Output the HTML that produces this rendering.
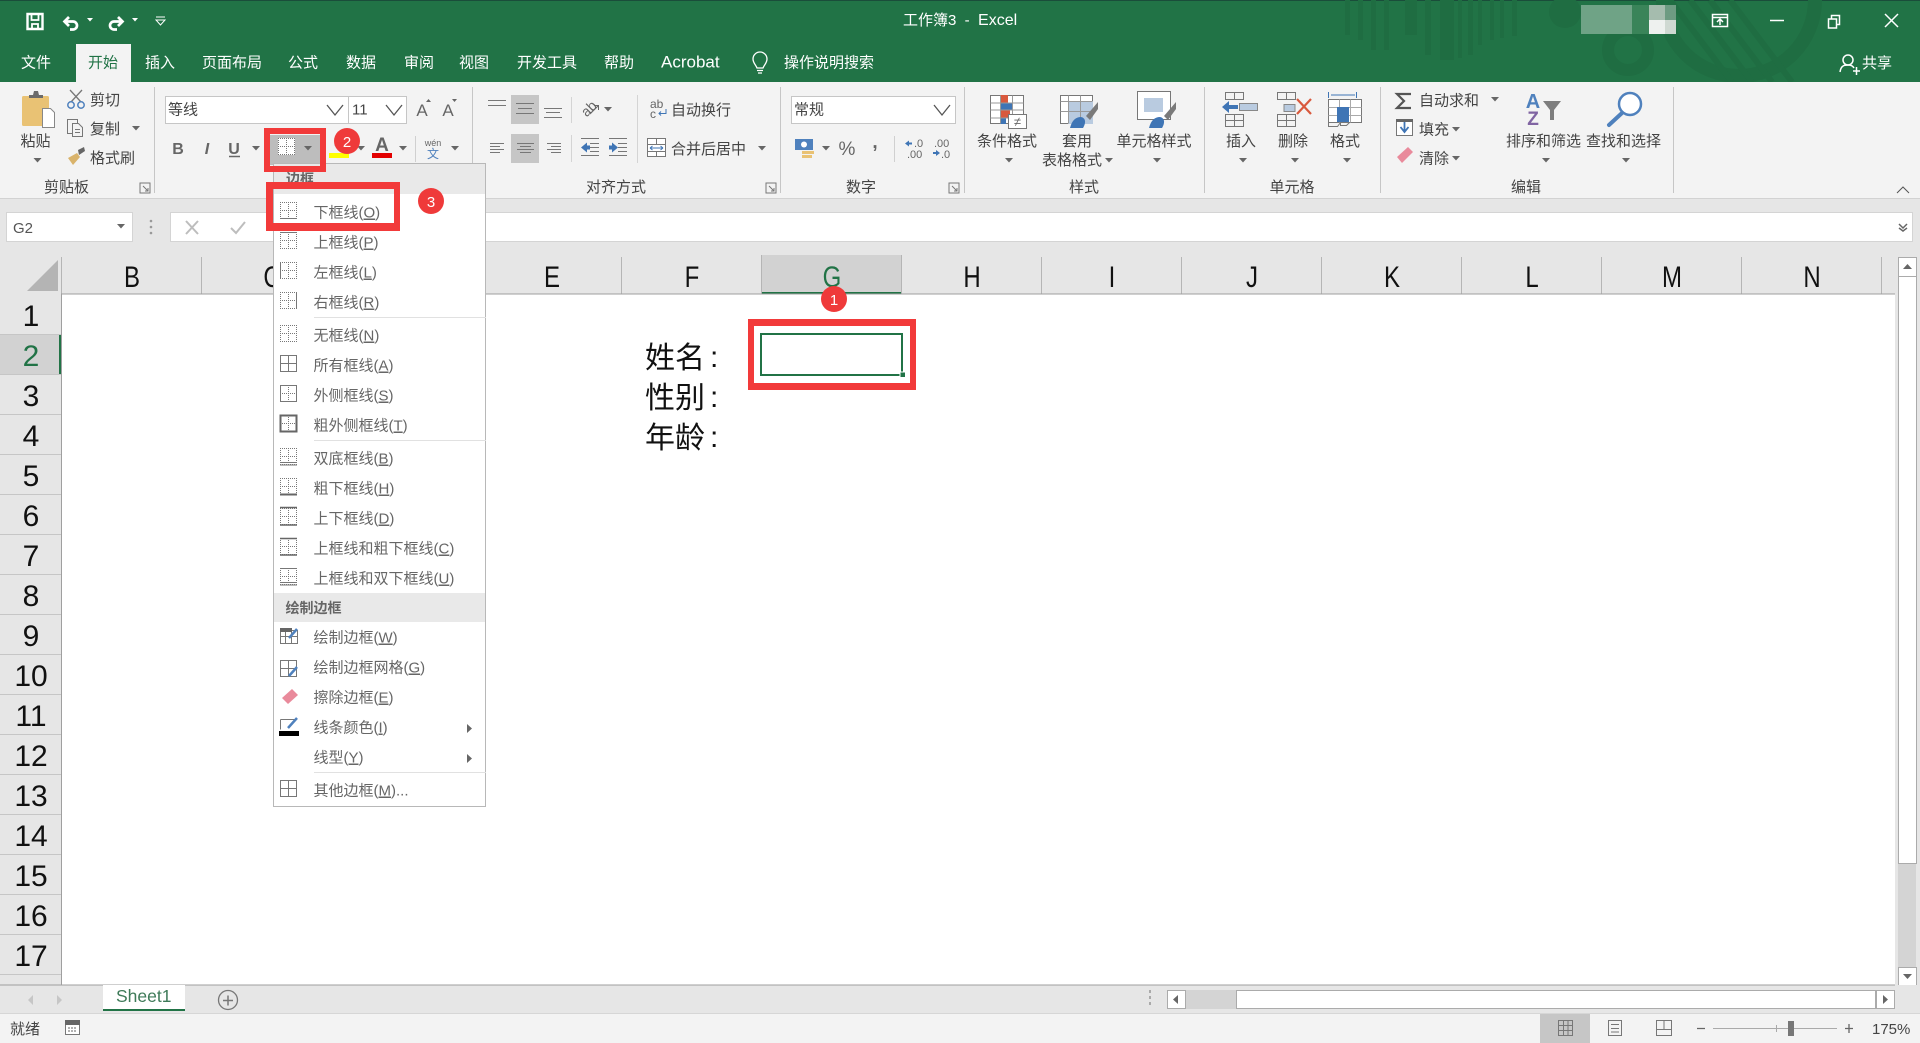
<!DOCTYPE html>
<html lang="zh-CN"><head><meta charset="utf-8"><title>工作簿3 - Excel</title>
<style>
html,body{margin:0;padding:0;background:#fff;overflow:hidden;width:1920px;height:1043px}
svg{position:absolute;left:0;top:0;display:block}
text{font-family:"Liberation Sans","Noto Sans CJK SC",sans-serif;font-size:15px;fill:#444;white-space:pre}
.w{fill:#fff}.m{fill:#666}.c{text-anchor:middle}
.u{text-decoration:underline}
.h{font-size:30px;fill:#111;text-anchor:middle}
.big{font-size:30px;fill:#111}
.b{font-weight:bold}
</style></head><body>
<svg width="1920" height="1043" viewBox="0 0 1920 1043" xmlns="http://www.w3.org/2000/svg">
<defs>
<path id="ca" d="M-4-2h8l-4 4.500z" fill="#666"/>
<path id="chev" d="M-8-5l8 10 8-10" fill="none" stroke="#555" stroke-width="1.300"/>
<path id="lau" d="M-5-5h10v10h-10z M-2-2l5 5M3 0v3h-3" fill="none" stroke="#777"/>
<g id="dg" fill="none" stroke="#777" stroke-dasharray="1 1"><path d="M0 .5h17M0 16.500h17M0 8.500h17M.5 0v17M16.500 0v17M8.500 0v17"/></g>
<g id="sg" fill="none" stroke="#777"><path d="M.5.5h16v16H.5zM8.500.5v16M.5 8.500h16"/></g>
</defs>

<!-- title bar -->
<rect width="1920" height="82" fill="#217346"/>
<rect width="1920" height="1" fill="#1a4d3a"/>
<g fill="#1f6d42">
<path d="M1345 0h5v35h-5zM1358 0h5v40h-5zM1371 0h5v50h-5zM1384 0h5v50h-5zM1405 0h12v35h-12zM1425 0h6v55h-6zM1440 0h14v60h-14zM1458 0h4v58h-4zM1468 0h5v55h-5zM1478 0h4v45h-4zM1490 0h4v40h-4zM1500 0h4v38h-4zM1512 0h5v36h-5z"/>
<circle cx="1565" cy="12" r="16"/>
</g>
<g fill="none" stroke="#1f6d42">
<circle cx="1628" cy="50" r="20" stroke-width="12"/>
<circle cx="1739" cy="0" r="76" stroke-width="14"/>
<path d="M1670 0l62 82M1690 0l62 82M1710 0l62 82M1730 0l62 82" stroke-width="6"/>
</g>
<rect x="1581" y="5" width="51" height="29" fill="#6fa386"/>
<rect x="1632" y="5" width="17" height="29" fill="#3a8459"/>
<rect x="1649" y="5" width="16" height="15" fill="#a5bcae"/>
<rect x="1665" y="5" width="11" height="15" fill="#6d9b82"/>
<rect x="1649" y="20" width="16" height="14" fill="#eef1ef"/>
<rect x="1665" y="20" width="11" height="14" fill="#cfd9d2"/>

<!-- QAT -->
<g fill="none" stroke="#fff">
<path d="M27.500 14h15v15h-15z" stroke-width="2.400"/><path d="M31.500 14v6h7v-6M32 29v-5h6v5" stroke-width="1.800"/>
<path d="M69 17l-4.500 4.500 4.500 4.500" stroke-width="2.700"/><path d="M65 21.500h8a4 4 0 0 1 0 8h-3" stroke-width="2.700"/>
<path d="M118 17l4.500 4.500-4.500 4.500" stroke-width="2.700"/><path d="M122 21.500h-8a4 4 0 0 0 0 8h3" stroke-width="2.700"/>
<path d="M156 17h9M156 20h9l-4.500 5z" stroke-width="1"/>
</g>
<path d="M87 18h6l-3 3.500zM132 18h6l-3 3.500z" fill="#fff"/>
<text x="903" y="25" class="w">工作簿3  -  <tspan style="font-size:16px">Excel</tspan></text>

<!-- window buttons -->
<g fill="none" stroke="#fff" stroke-width="1.500">
<path d="M1712.500 14.500h15v12h-15zM1712.500 17.500h15M1720 25v-6M1717 22l3-3 3 3"/>
<path d="M1770 20.500h14"/>
<path d="M1828.500 19h8v9h-8zM1831.500 19v-3.500h8v9h-3"/>
<path d="M1885 14l13 13M1898 14l-13 13"/>
<circle cx="1848" cy="60" r="5"/><path d="M1840 72c1-7 5-7 8-7s5 1 6 3M1853 71h7M1856.500 67v8"/>
</g>

<!-- tabs -->
<rect x="76" y="44" width="55" height="38" fill="#f3f3f3"/>
<text x="21" y="67.500" class="w">文件</text>
<text x="88" y="67.500" style="fill:#217346">开始</text>
<text x="145" y="67.500" class="w">插入</text>
<text x="202" y="67.500" class="w">页面布局</text>
<text x="288" y="67.500" class="w">公式</text>
<text x="346" y="67.500" class="w">数据</text>
<text x="404" y="67.500" class="w">审阅</text>
<text x="459" y="67.500" class="w">视图</text>
<text x="517" y="67.500" class="w">开发工具</text>
<text x="604" y="67.500" class="w">帮助</text>
<text x="661" y="67.500" class="w" style="font-size:17px">Acrobat</text>
<g fill="none" stroke="#fff" stroke-width="1.300"><path d="M757 68c-1-3-4-5-4-9a7 7 0 0 1 14 0c0 4-3 6-4 9zM757 70.500h6M758 73h4"/></g>
<text x="784" y="67.500" class="w">操作说明搜索</text>
<text x="1862" y="68" class="w">共享</text>

<!-- ribbon -->
<rect y="82" width="1920" height="116" fill="#f3f3f3"/>
<rect y="198" width="1920" height="1" fill="#d2d2d2"/>
<rect y="199" width="1920" height="95" fill="#e6e6e6"/>
<path d="M154.500 87v106M472.500 87v106M780.500 87v106M964.500 87v106M1204.500 87v106M1380.500 87v106M1673.500 87v106" stroke="#c6c6c6"/>

<!-- clipboard -->
<rect x="22" y="96" width="27" height="30" rx="1.500" fill="#e9c274"/>
<path d="M29 98v-3h4l1-4h4l1 4h4v3z" fill="#6b6b6b"/>
<path d="M42.500 108.500h8l4 4v15h-12z" fill="#fff" stroke="#888"/>
<text x="35.500" y="146" class="c">粘贴</text><use href="#ca" x="37.500" y="160"/>
<g fill="none" stroke="#777" stroke-width="1.300"><path d="M70 90l11 12M82 90l-11 12"/></g>
<g fill="none" stroke="#4f81bd" stroke-width="1.500"><circle cx="71" cy="105" r="3.200"/><circle cx="81" cy="105" r="3.200"/></g>
<text x="90" y="105">剪切</text>
<g fill="#f3f3f3" stroke="#777"><path d="M67.500 119.500h10v14h-10z"/><path d="M72.500 123.500h6l4 4v9h-10z"/><path d="M75 129.500h5M75 132.500h5"/></g>
<text x="90" y="134">复制</text><use href="#ca" x="136" y="128"/>
<path d="M78 150l6-3 1 4-6 4z" fill="#666"/><path d="M68 158l9-5 3 4-7 8z" fill="#d9b36b"/>
<text x="90" y="163">格式刷</text>
<text x="44" y="192">剪贴板</text><use href="#lau" x="145" y="188"/>

<!-- font -->
<rect x="165.500" y="96.500" width="241" height="27" fill="#fff" stroke="#c6c6c6"/>
<path d="M348.500 96v28" stroke="#c6c6c6"/>
<text x="168" y="114.500">等线</text><text x="352" y="114.500">11</text>
<use href="#chev" x="335" y="110"/><use href="#chev" x="394" y="110"/>
<text x="422" y="116" class="c m" style="font-size:17px">A</text><path d="M426 102l2.500-3 2.500 3z" fill="#666"/>
<text x="448" y="116" class="c m" style="font-size:17px">A</text><path d="M452 99l2.500 3 2.500-3z" fill="#666"/>
<text x="178" y="154" class="c m b" style="font-size:16px">B</text>
<text x="207" y="154" class="c m b" style="font-size:16px;font-style:italic">I</text>
<text x="234" y="154" class="c m b" style="font-size:16px">U</text><path d="M229 156.500h11" stroke="#666" stroke-width="1.500"/>
<use href="#ca" x="256" y="148"/>
<rect x="270" y="135" width="50" height="30" fill="#bdbdbd"/>
<rect x="278" y="138" width="17" height="17" fill="#fff"/><use href="#dg" x="278" y="138"/>
<use href="#ca" x="308" y="148"/>
<path d="M335 145l6-5 6 6-5 5z" fill="#fff" stroke="#888"/>
<rect x="329" y="153" width="20" height="5" fill="#ffff00"/><use href="#ca" x="361" y="148"/>
<text x="382" y="151" class="c m b" style="font-size:19px">A</text>
<rect x="372" y="153" width="20" height="5" fill="#e30000"/><use href="#ca" x="403" y="148"/>
<path d="M415.500 136v26" stroke="#d0d0d0"/>
<text x="433" y="146" class="c m" style="font-size:9px">wén</text>
<text x="433" y="158" class="c" style="font-size:12px;fill:#4f81bd">文</text><use href="#ca" x="455" y="148"/>

<!-- alignment -->
<rect x="511" y="95" width="28" height="29" fill="#c6c6c6"/><rect x="511" y="134" width="28" height="29" fill="#c6c6c6"/>
<g stroke="#777" fill="none">
<path d="M488 100.500h18M488 105.500h18"/>
<path d="M516 103.500h18M518 108.500h14M516 113.500h18"/>
<path d="M544 108.500h18M546 112.500h14M544 117.500h18"/>
<path d="M490 143.500h14M490 146.500h10M490 149.500h14M490 152.500h10"/>
<path d="M517 143.500h17M520 146.500h11M517 149.500h17M520 152.500h11"/>
<path d="M547 143.500h14M551 146.500h10M547 149.500h14M551 152.500h10"/>
<path d="M581 138.500h18M590 143.500h9M590 147.500h9M590 151.500h9M581 155.500h18"/>
<path d="M609 138.500h18M618 143.500h9M618 147.500h9M618 151.500h9M609 155.500h18"/>
</g>
<path d="M571.500 97v26M571.500 135v27M637.500 95v68" stroke="#d4d4d4"/>
<path d="M581 147.500l6-5v3h3v4h-3v3zM618 147.500l-6-5v3h-3v4h3v3z" fill="#3f75b5"/>
<text x="581" y="114" class="m" style="font-size:14px" transform="rotate(-45 588 109)">ab</text>
<path d="M590 114l8-8M594 105.500h4.500v4.500" stroke="#666" fill="none"/><use href="#ca" x="608" y="109"/>
<text x="650" y="108" class="m" style="font-size:12px">ab</text><text x="650" y="118" class="m" style="font-size:12px">c</text>
<path d="M666 109v4.500h-7m2-2l-2 2 2 2" stroke="#3f75b5" fill="none"/>
<text x="671" y="115">自动换行</text>
<path d="M647.500 138.500h18v18h-18zM647.500 144.500h18M647.500 151.500h18M656.500 138.500v6M656.500 151.500v5" stroke="#777" fill="#fff"/>
<path d="M650 148h13M650 148l2.500-2M650 148l2.500 2M663 148l-2.500-2M663 148l-2.500 2" stroke="#3f75b5" fill="none"/>
<text x="671" y="154">合并后居中</text><use href="#ca" x="762" y="148"/>
<text x="586" y="192">对齐方式</text><use href="#lau" x="771" y="188"/>

<!-- number -->
<rect x="791.500" y="96.500" width="164" height="27" fill="#fff" stroke="#c6c6c6"/>
<text x="794" y="114.500">常规</text><use href="#chev" x="942" y="110"/>
<rect x="795" y="139" width="18" height="11" fill="#4f81bd"/><circle cx="804" cy="144.500" r="3" fill="#fff"/>
<path d="M802 151h12v3h-12zM802 155h10v3h-10z" fill="#e9c274"/>
<use href="#ca" x="826" y="148"/>
<text x="847" y="155" class="c m" style="font-size:19px">%</text>
<text x="875" y="148" class="c m b" style="font-size:19px">,</text>
<path d="M894.500 136v26" stroke="#d0d0d0"/>
<text x="914" y="147" class="m" style="font-size:11px">.0</text><text x="907" y="158" class="m" style="font-size:11px">.00</text>
<path d="M905 143.500l4-3v2h3v2h-3v2z" fill="#3f75b5"/>
<text x="934" y="147" class="m" style="font-size:11px">.00</text><text x="941" y="158" class="m" style="font-size:11px">.0</text>
<path d="M940 153l-4-3v2h-3v2h3v2z" fill="#3f75b5"/>
<text x="846" y="192">数字</text><use href="#lau" x="954" y="188"/>

<!-- styles -->
<g fill="#fff" stroke="#777"><path d="M990.500 95.500h33v28h-33z"/></g>
<path d="M1000 95h8v8h-8zM1000 110h10v8h-10z" fill="#d9593d"/><path d="M1000 103h12v7h-12zM1000 118h6v6h-6z" fill="#3f75b5"/>
<path d="M1000.500 95.500v28M1012.500 95.500v28M990.500 103h33M990.500 110h33M990.500 118h33" stroke="#999" fill="none"/>
<rect x="1008.500" y="114.500" width="18" height="14" fill="#fff" stroke="#777"/>
<text x="1017.500" y="126" class="c m" style="font-size:13px">≠</text>
<text x="1007" y="146" class="c">条件格式</text><use href="#ca" x="1009" y="160"/>
<rect x="1060.500" y="95.500" width="32" height="28" fill="#fff" stroke="#777"/>
<rect x="1068" y="101" width="25" height="23" fill="#b9cbe0"/>
<path d="M1068.500 95.500v28M1080.500 95.500v28M1060.500 101.500h32M1060.500 111.500h32" stroke="#999" fill="none"/>
<path d="M1098 102l-12 14 4 4 8-11z" fill="#7a7a7a"/><path d="M1070 128c2-8 6-11 11-11 5 1 5 6 2 11z" fill="#3f75b5"/>
<text x="1077" y="146" class="c">套用</text><text x="1072" y="165" class="c">表格格式</text><use href="#ca" x="1109" y="160"/>
<rect x="1137.500" y="91.500" width="33" height="28" fill="#fff" stroke="#777"/>
<rect x="1144" y="98" width="19" height="14" fill="#b9cbe0"/>
<path d="M1176 102l-12 14 4 4 8-11z" fill="#7a7a7a"/><path d="M1149 128c2-8 6-11 11-11 5 1 5 6 2 11z" fill="#3f75b5"/>
<text x="1154" y="146" class="c">单元格样式</text><use href="#ca" x="1157" y="160"/>
<text x="1084" y="192" class="c">样式</text>

<!-- cells -->
<g fill="none" stroke="#777"><path d="M1225.500 92.500h18v7h-18zM1234.500 92.500v7M1225.500 114.500h18v12h-18zM1234.500 114.500v12M1225.500 120.500h18"/></g>
<path d="M1239.500 103.500h18v7h-18z" fill="#b9cbe0" stroke="#888"/>
<path d="M1222 107l7-6v4h9v4h-9v4z" fill="#3f75b5"/>
<text x="1241" y="146" class="c">插入</text><use href="#ca" x="1243" y="160"/>
<g fill="none" stroke="#777"><path d="M1277.500 92.500h18v7h-18zM1286.500 92.500v7M1277.500 114.500h18v12h-18zM1286.500 114.500v12M1277.500 120.500h18"/></g>
<path d="M1284 104.500h11v7h-11z" fill="#b9cbe0" stroke="#888"/>
<path d="M1297 99l14 15M1311 99l-14 15" stroke="#d9593d" stroke-width="2.200" fill="none"/>
<text x="1293" y="146" class="c">删除</text><use href="#ca" x="1295" y="160"/>
<rect x="1328.500" y="99.500" width="33" height="23" fill="#fff" stroke="#777"/>
<path d="M1339.500 99.500v23M1350.500 99.500v23M1328.500 107.500h33M1328.500 115.500h33" stroke="#aaa"/>
<path d="M1328.500 122.500v4h9l3-4M1340.500 122.500v3h6l3-3" fill="none" stroke="#777"/>
<rect x="1337" y="107" width="12" height="15" fill="#3f75b5"/>
<path d="M1328.500 92v6M1356.500 92v6M1331 95h24" stroke="#3f75b5" fill="none"/>
<text x="1345" y="146" class="c">格式</text><use href="#ca" x="1347" y="160"/>
<text x="1292" y="192" class="c">单元格</text>

<!-- edit -->
<path d="M1411 94h-14l7 7-7 7h14" fill="none" stroke="#555" stroke-width="2.200"/>
<text x="1419" y="105.500">自动求和</text><use href="#ca" x="1495" y="99"/>
<rect x="1396.500" y="119.500" width="16" height="16" fill="#fff" stroke="#777"/><rect x="1396" y="119" width="17" height="3" fill="#666"/>
<path d="M1404.500 122v9M1400.500 127l4 5 4-5" stroke="#3f75b5" stroke-width="1.800" fill="none"/>
<text x="1419" y="134.500">填充</text><use href="#ca" x="1456" y="129"/>
<path d="M1397 157l11-10 5 5-11 11z" fill="#e98a9b"/>
<text x="1419" y="163.500">清除</text><use href="#ca" x="1456" y="158"/>
<text x="1533" y="108" class="c b" style="font-size:20px;fill:#4f81bd">A</text>
<text x="1533" y="125" class="c b" style="font-size:19px;fill:#8064a2">Z</text>
<path d="M1543 101h18l-7 9v10h-4v-10z" fill="#7d7d7d"/>
<text x="1506" y="146">排序和筛选</text><use href="#ca" x="1546" y="160"/>
<circle cx="1630" cy="104" r="11" fill="#fff" stroke="#4f81bd" stroke-width="2.500"/>
<path d="M1622 113l-13 12" stroke="#4f81bd" stroke-width="4" stroke-linecap="round"/>
<text x="1586" y="146">查找和选择</text><use href="#ca" x="1626" y="160"/>
<text x="1526" y="192" class="c">编辑</text>
<path d="M1897 193l6-6 6 6" fill="none" stroke="#555"/>

<!-- formula bar -->
<rect x="6.500" y="212.500" width="126" height="29" fill="#fff" stroke="#d4d4d4"/>
<text x="13" y="233" style="fill:#555">G2</text><use href="#ca" x="121" y="226"/>
<circle cx="151" cy="221" r="1.300" fill="#999"/><circle cx="151" cy="227" r="1.300" fill="#999"/><circle cx="151" cy="233" r="1.300" fill="#999"/>
<rect x="170.500" y="212.500" width="1742" height="29" fill="#fff" stroke="#d4d4d4"/>
<path d="M186 221l12 13M198 221l-12 13" stroke="#bdbdbd" stroke-width="2" fill="none"/>
<path d="M231 228l5 5 9-11" stroke="#bdbdbd" stroke-width="2" fill="none"/>
<path d="M1899 224l4 4 4-4M1899 228l4 3 4-3" stroke="#666" fill="none" stroke-width="1.500"/>

<!-- headers -->
<rect x="761" y="255" width="141" height="39" fill="#d2d2d2"/>
<rect x="761" y="292" width="141" height="2" fill="#217346"/>
<path d="M27 291l31-31v31z" fill="#b4b4b4"/>
<g stroke="#b5b5b5"><path d="M201.500 257v37M341.500 257v37M481.500 257v37M621.500 257v37M761.500 255v39M901.500 255v39M1041.500 257v37M1181.500 257v37M1321.500 257v37M1461.500 257v37M1601.500 257v37M1741.500 257v37M1881.500 257v37M61.500 257v37"/></g>
<rect x="0" y="294" width="61" height="691" fill="#e6e6e6"/>
<rect x="61" y="294" width="1834" height="691" fill="#fff"/>
<rect x="61" y="293.500" width="1834" height="1" fill="#9f9f9f"/>
<rect x="61" y="294" width="1" height="691" fill="#9f9f9f"/>
<rect x="0" y="334" width="60" height="41" fill="#d2d2d2"/>
<rect x="59" y="334" width="2" height="41" fill="#217346"/>
<g stroke="#c6c6c6"><path d="M0 334.500h61M0 374.500h61M0 414.500h61M0 454.500h61M0 494.500h61M0 534.500h61M0 574.500h61M0 614.500h61M0 654.500h61M0 694.500h61M0 734.500h61M0 774.500h61M0 814.500h61M0 854.500h61M0 894.500h61M0 934.500h61M0 974.500h61"/></g>
<g>
<text class="h" transform="translate(132,287) scale(.8,1)">B</text>
<text class="h" transform="translate(272,287) scale(.8,1)">C</text>
<text class="h" transform="translate(552,287) scale(.8,1)">E</text>
<text class="h" transform="translate(692,287) scale(.8,1)">F</text>
<text class="h" transform="translate(832,287) scale(.8,1)" style="fill:#217346">G</text>
<text class="h" transform="translate(972,287) scale(.8,1)">H</text>
<text class="h" transform="translate(1112,287) scale(.8,1)">I</text>
<text class="h" transform="translate(1252,287) scale(.8,1)">J</text>
<text class="h" transform="translate(1392,287) scale(.8,1)">K</text>
<text class="h" transform="translate(1532,287) scale(.8,1)">L</text>
<text class="h" transform="translate(1672,287) scale(.8,1)">M</text>
<text class="h" transform="translate(1812,287) scale(.8,1)">N</text>
</g>
<g>
<text class="h" x="31" y="326">1</text>
<text class="h" x="31" y="366" style="fill:#217346">2</text>
<text class="h" x="31" y="406">3</text>
<text class="h" x="31" y="446">4</text>
<text class="h" x="31" y="486">5</text>
<text class="h" x="31" y="526">6</text>
<text class="h" x="31" y="566">7</text>
<text class="h" x="31" y="606">8</text>
<text class="h" x="31" y="646">9</text>
<text class="h" x="31" y="686">10</text>
<text class="h" x="31" y="726">11</text>
<text class="h" x="31" y="766">12</text>
<text class="h" x="31" y="806">13</text>
<text class="h" x="31" y="846">14</text>
<text class="h" x="31" y="886">15</text>
<text class="h" x="31" y="926">16</text>
<text class="h" x="31" y="966">17</text>
</g>

<!-- cells -->
<text class="big" x="645" y="368">姓名</text><text class="big" x="710" y="367">:</text>
<text class="big" x="645" y="408">性别</text><text class="big" x="710" y="407">:</text>
<text class="big" x="645" y="448">年龄</text><text class="big" x="710" y="447">:</text>
<rect x="761" y="334" width="141" height="41" fill="none" stroke="#217346" stroke-width="2"/>
<rect x="900" y="372" width="5.500" height="5.500" fill="#217346" stroke="#fff"/>

<!-- v scrollbar -->
<rect x="1895" y="257" width="25" height="728" fill="#e6e6e6"/>
<rect x="1898" y="276" width="18" height="691" fill="#d4d4d4"/>
<rect x="1898.500" y="276.500" width="18" height="587" fill="#fff" stroke="#ababab"/>
<rect x="1898.500" y="257.500" width="18" height="19" fill="#fff" stroke="#ababab"/>
<rect x="1898.500" y="967.500" width="18" height="18" fill="#fff" stroke="#ababab"/>
<path d="M1903 269l4.500-5 4.500 5z" fill="#666"/><path d="M1903 974l4.500 5 4.500-5z" fill="#666"/>

<!-- tab bar -->
<rect y="985" width="1920" height="29" fill="#e6e6e6"/>
<rect y="984.500" width="1895" height="1" fill="#9f9f9f"/>
<rect y="1013.500" width="1920" height="1" fill="#c6c6c6"/>
<rect x="103" y="985" width="82" height="26" fill="#fff"/>
<rect x="103" y="1009" width="82" height="2" fill="#217346"/>
<text x="116" y="1002" style="font-size:17.500px;fill:#3e7a58">Sheet1</text>
<path d="M33 995l-5 5 5 5zM57 995l5 5-5 5z" fill="#c6c6c6"/>
<circle cx="228" cy="1000" r="9.500" fill="none" stroke="#777" stroke-width="1.300"/>
<path d="M223 1000.500h10M228 995.500v10" stroke="#777" stroke-width="1.500"/>
<path d="M1150 990v3M1150 996v3M1150 1002v3" stroke="#aaa" stroke-width="2"/>
<rect x="1167.500" y="990.500" width="18" height="18" fill="#fff" stroke="#ababab"/>
<path d="M1178 995l-5 4.500 5 4.500z" fill="#666"/>
<rect x="1186" y="990" width="50" height="19" fill="#d4d4d4"/>
<rect x="1236.500" y="990.500" width="639" height="18" fill="#fff" stroke="#ababab"/>
<rect x="1876.500" y="990.500" width="18" height="18" fill="#fff" stroke="#ababab"/>
<path d="M1883 995l5 4.500-5 4.500z" fill="#666"/>

<!-- status bar -->
<rect y="1014" width="1920" height="29" fill="#f3f3f3"/>
<text x="10" y="1034">就绪</text>
<rect x="65.500" y="1021.500" width="14" height="13" fill="#fff" stroke="#777"/><rect x="65" y="1020" width="15" height="5" fill="#666"/>
<path d="M68 1028h9M68 1031h9" stroke="#666" stroke-dasharray="2 1"/>
<rect x="1540" y="1014" width="50" height="29" fill="#c6c6c6"/>
<path d="M1558.500 1020.500h14v15h-14zM1563.500 1020.500v15M1568 1020.500v15M1558.500 1025.500h14M1558.500 1030.500h14" fill="none" stroke="#777"/>
<path d="M1608.500 1020.500h13v15h-13zM1611 1024.500h8M1611 1028.500h8M1611 1032h8" fill="none" stroke="#777"/>
<path d="M1656.500 1020.500h15v15h-15zM1656.500 1029.500h15M1664 1020.500v9" fill="none" stroke="#777"/>
<path d="M1697 1028.500h8M1845 1028.500h8M1849 1024v9" stroke="#666" stroke-width="1.300"/>
<path d="M1713 1028.500h124M1776.500 1025v7" stroke="#aaa"/>
<rect x="1788" y="1021" width="6" height="15" fill="#777"/>
<text x="1872" y="1034">175%</text>

<!-- menu -->
<rect x="273.500" y="163.500" width="212" height="643" fill="#fff" stroke="#b8b8b8"/>
<rect x="274" y="164" width="211" height="30" fill="#e9e9e9"/>
<rect x="274" y="593" width="211" height="29" fill="#e9e9e9"/>
<text x="286" y="184" class="m b" style="font-size:14px">边框</text>
<text x="285.500" y="613" class="m b" style="font-size:14px">绘制边框</text>
<path d="M314 317.500h172M314 440.500h172M314 772.500h172" stroke="#e1e1e1"/>

<use href="#dg" x="280" y="202"/><path d="M280 218.500h17" stroke="#777"/>
<use href="#dg" x="280" y="232"/><path d="M280 232.500h17" stroke="#777"/>
<use href="#dg" x="280" y="262"/><path d="M280.500 262v17" stroke="#777"/>
<use href="#dg" x="280" y="292"/><path d="M296.500 292v17" stroke="#777"/>
<use href="#dg" x="280" y="325"/>
<use href="#sg" x="280" y="355"/>
<use href="#dg" x="280" y="385"/><path d="M280.500 385.500h16v16h-16z" fill="none" stroke="#777"/>
<use href="#dg" x="280" y="415"/><path d="M280.500 415.500h16v16h-16z" fill="none" stroke="#666" stroke-width="2"/>
<use href="#dg" x="280" y="448"/><path d="M280 462.500h17M280 465h17" stroke="#777"/>
<use href="#dg" x="280" y="478"/><path d="M280 494.500h17" stroke="#666" stroke-width="2"/>
<use href="#dg" x="280" y="508"/><path d="M280 507.500h17M280 525h17" stroke="#666" stroke-width="1.500"/>
<use href="#dg" x="280" y="538"/><path d="M280 538.500h17M280 555h17" stroke="#666" stroke-width="1.500"/>
<use href="#dg" x="280" y="568"/><path d="M280 568.500h17M280 582.500h17M280 585h17" stroke="#777"/>
<path d="M280.500 630.500h17v13h-17zM285.500 630.500v13M291.500 630.500v13M280.500 636.500h17" fill="#fff" stroke="#777"/>
<rect x="280" y="628" width="12" height="4" fill="#666"/><path d="M289 638l8-9" stroke="#4f81bd" stroke-width="2.500"/>
<path d="M280.500 660.500h16v16h-16zM288.500 660.500v16M280.500 668.500h16" fill="none" stroke="#777"/>
<path d="M289 676l8-9" stroke="#4f81bd" stroke-width="2.500"/>
<path d="M282 698l10-9 6 6-10 9z" fill="#e98a9b"/>
<path d="M280.500 719.500h15M280.500 719.500v10" stroke="#777" fill="none"/><path d="M288 728l9-10" stroke="#4f81bd" stroke-width="2.500"/>
<rect x="279" y="731" width="20" height="5" fill="#000"/>
<use href="#sg" x="280" y="780"/>
<path d="M467 724l5 4.500-5 4.500zM467 754l5 4.500-5 4.500z" fill="#666"/>

<g class="mt">
<text class="m" x="313.500" y="217.500">下框线(<tspan class="u">O</tspan>)</text>
<text class="m" x="313.500" y="247.500">上框线(<tspan class="u">P</tspan>)</text>
<text class="m" x="313.500" y="277.500">左框线(<tspan class="u">L</tspan>)</text>
<text class="m" x="313.500" y="307.500">右框线(<tspan class="u">R</tspan>)</text>
<text class="m" x="313.500" y="340.500">无框线(<tspan class="u">N</tspan>)</text>
<text class="m" x="313.500" y="370.500">所有框线(<tspan class="u">A</tspan>)</text>
<text class="m" x="313.500" y="400.500">外侧框线(<tspan class="u">S</tspan>)</text>
<text class="m" x="313.500" y="430.500">粗外侧框线(<tspan class="u">T</tspan>)</text>
<text class="m" x="313.500" y="463.500">双底框线(<tspan class="u">B</tspan>)</text>
<text class="m" x="313.500" y="493.500">粗下框线(<tspan class="u">H</tspan>)</text>
<text class="m" x="313.500" y="523.500">上下框线(<tspan class="u">D</tspan>)</text>
<text class="m" x="313.500" y="553.500">上框线和粗下框线(<tspan class="u">C</tspan>)</text>
<text class="m" x="313.500" y="583.500">上框线和双下框线(<tspan class="u">U</tspan>)</text>
<text class="m" x="313.500" y="642.500">绘制边框(<tspan class="u">W</tspan>)</text>
<text class="m" x="313.500" y="672.500">绘制边框网格(<tspan class="u">G</tspan>)</text>
<text class="m" x="313.500" y="702.500">擦除边框(<tspan class="u">E</tspan>)</text>
<text class="m" x="313.500" y="732.500">线条颜色(<tspan class="u">I</tspan>)</text>
<text class="m" x="313.500" y="762.500">线型(<tspan class="u">Y</tspan>)</text>
<text class="m" x="313.500" y="795.500">其他边框(<tspan class="u">M</tspan>)...</text>
</g>

<!-- annotations -->
<g>
<path fill="#f23a3a" fill-rule="evenodd" d="M748 319h168v71H748zM754 326v57h156v-57z"/>
<path fill="#f23a3a" fill-rule="evenodd" d="M264 128h62v44H264zM270 134v32h50v-32z"/>
<path fill="#f23a3a" fill-rule="evenodd" d="M266 182h134v49H266zM273 189v34h121v-34z"/>
</g>
<circle cx="834" cy="299" r="13" fill="#ef3a3a"/><text x="834" y="305" class="c w" style="font-size:15px">1</text>
<circle cx="347" cy="141" r="13" fill="#ef3a3a"/><text x="347" y="147" class="c w" style="font-size:15px">2</text>
<circle cx="431" cy="201" r="13" fill="#ef3a3a"/><text x="431" y="207" class="c w" style="font-size:15px">3</text>
</svg>
</body></html>
